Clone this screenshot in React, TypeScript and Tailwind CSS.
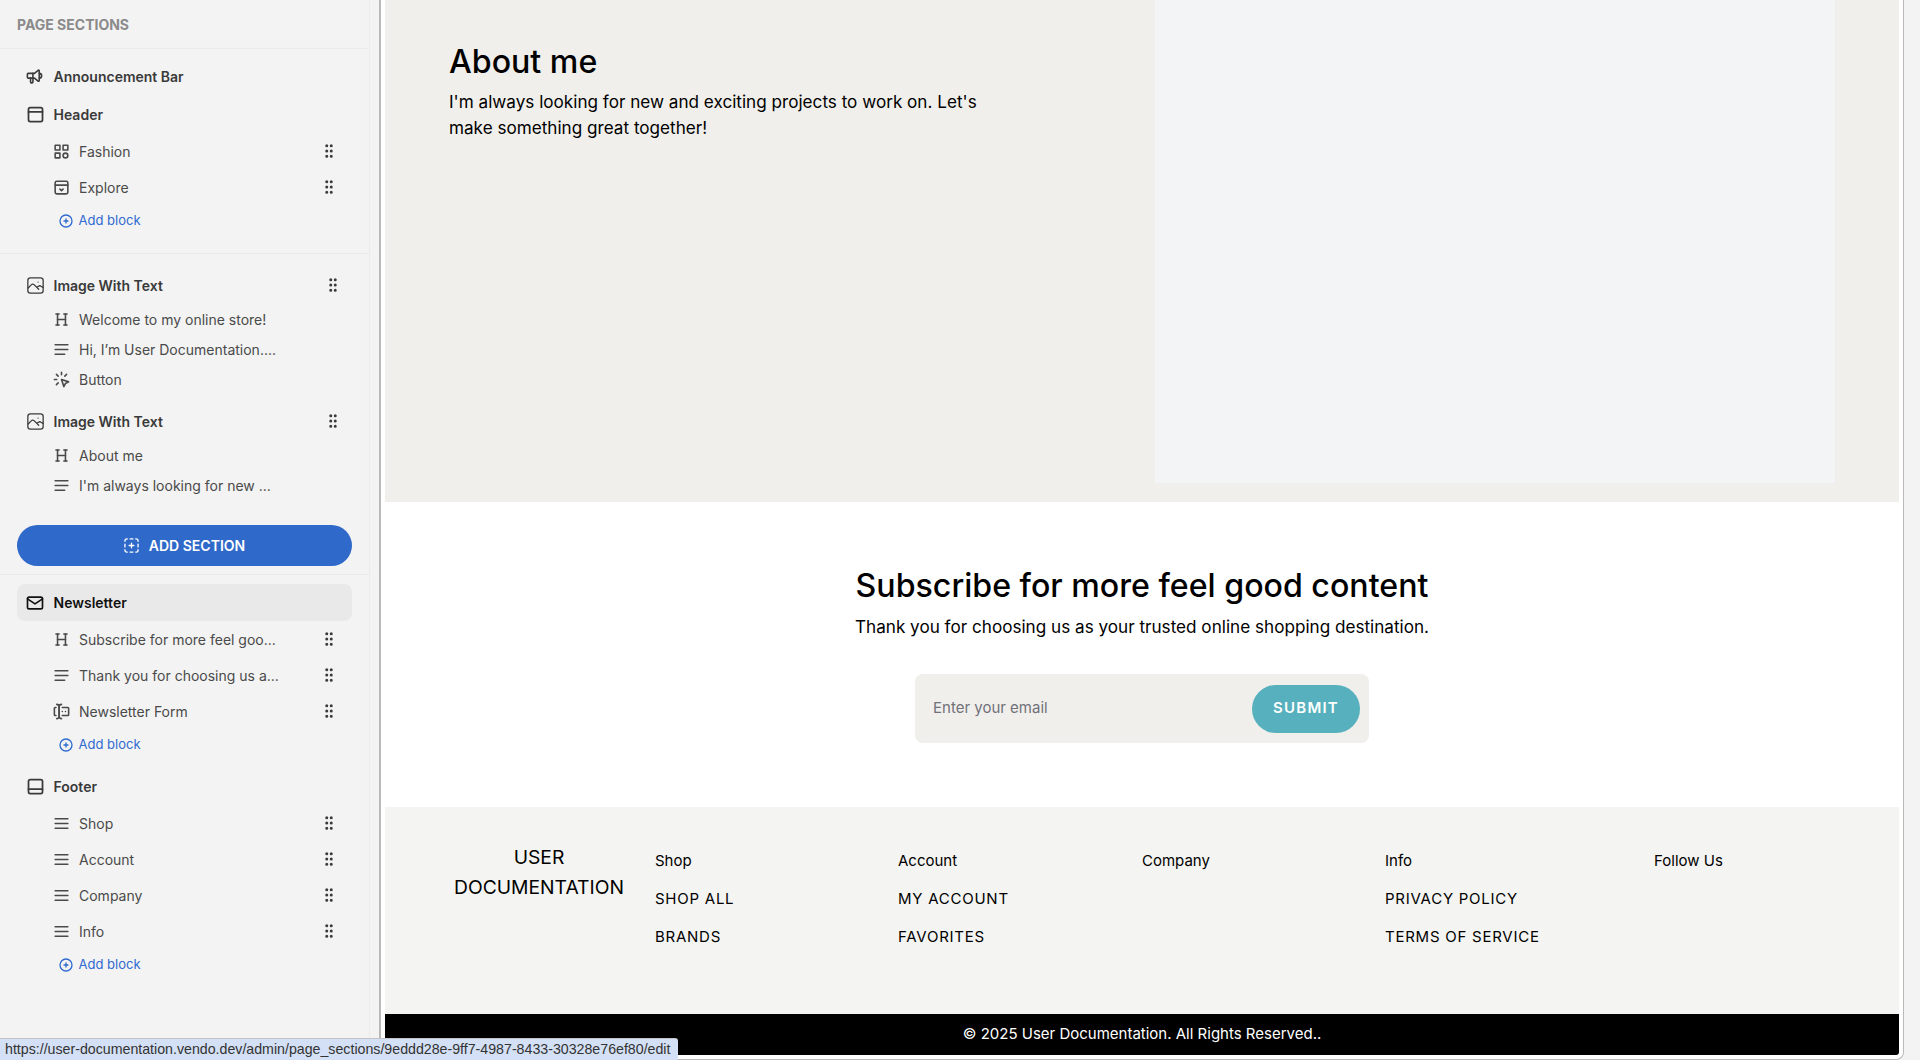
import React from 'react';
import {
  TbSpeakerphone,
  TbLayoutNavbar,
  TbCategory,
  TbLayoutNavbarExpand,
  TbGripVertical,
  TbCirclePlus,
  TbHeading,
  TbAlignJustified,
  TbClick,
  TbMail,
  TbForms,
  TbLayoutBottombar,
  TbMenu2,
} from 'react-icons/tb';

const ImageIcon = () => (
  <svg viewBox="0 0 20 20" fill="none" stroke="currentColor" strokeWidth="1.5" strokeLinecap="round" strokeLinejoin="round" className="w-[17px] h-[17px] ml-[2px]">
    <rect x="1" y="1" width="18" height="18" rx="3" />
    <path d="M1.3 13l4-4c1-.9 2-.9 3 0l5.5 5.5" />
    <path d="M12.5 11.5l1-.7c1-.7 2-.7 3 0l2.3 1.4" />
    <path d="M13 6h.01" />
  </svg>
);

const DashedPlus = () => (
  <svg viewBox="0 0 16 16" fill="none" stroke="currentColor" strokeWidth="1.4" strokeLinecap="round" className="w-[15px] h-[15px]">
    <path d="M1 3.5V3a2 2 0 0 1 2-2h.5M6.5 1h3M12.5 1h.5a2 2 0 0 1 2 2v.5M15 6.5v3M15 12.5v.5a2 2 0 0 1-2 2h-.5M9.5 15h-3M3.5 15H3a2 2 0 0 1-2-2v-.5M1 9.5v-3" />
    <path d="M5.5 8h5M8 5.5v5" />
  </svg>
);

const SectionRow = ({ icon, label, drag, active }: { icon: React.ReactNode; label: string; drag?: boolean; active?: boolean }) => (
  <div className={`flex items-center pl-[8px] pr-[10px] mx-[17px] text-[14px] font-semibold ${active ? 'h-[37px] bg-[#e9e9e9] rounded-lg text-[#111]' : 'h-[38px] text-[#3a3a3a]'}`}>
    <span className="w-[28.5px] flex items-center">{icon}</span>
    <span className="flex-1">{label}</span>
    {drag && <TbGripVertical size={18} className="text-[#3a3a3a]" />}
  </div>
);

const BlockRow = ({ icon, label, drag, short }: { icon: React.ReactNode; label: string; drag?: boolean; short?: boolean }) => (
  <div className={`flex items-center pl-[52px] pr-[31px] text-[14px] text-[#4a4a4a] ${short ? 'h-[30px]' : 'h-[36px]'}`}>
    <span className="w-[27px] flex items-center">{icon}</span>
    <span className="flex-1">{label}</span>
    {drag && <TbGripVertical size={18} className="text-[#3a3a3a]" />}
  </div>
);

const AddBlock = () => (
  <div className="flex items-center h-[28px] pt-[3px] pl-[58px] text-[13px] text-[#2f6bd0]">
    <TbCirclePlus size={16} className="mr-[4.5px]" />
    Add block
  </div>
);

const FooterColumn = ({ title, links, className }: { title: string; links: string[]; className: string }) => (
  <div className={className}>
    <p className="text-[15px] leading-[24px] text-black">{title}</p>
    {links.map((link) => (
      <p key={link} className="mt-[14px] text-[15px] leading-[24px] tracking-[0.05em] text-black">{link}</p>
    ))}
  </div>
);

const Sidebar = () => {
  const text = <TbAlignJustified size={19} />;
  const menu = <TbMenu2 size={19} />;
  const heading = <TbHeading size={19} />;
  return (
    <aside className="w-[370px] shrink-0 h-full bg-[#f3f3f3] border-r border-[#ececec]">
      <div className="h-[49px] border-b border-[#ebebeb] pl-[17px] flex items-center">
        <span className="text-[14px] font-bold text-[#8a8a8a] uppercase">Page Sections</span>
      </div>
      <div className="pt-[8px]">
        <SectionRow icon={<TbSpeakerphone size={19} />} label="Announcement Bar" />
        <SectionRow icon={<TbLayoutNavbar size={21} />} label="Header" />
        <BlockRow icon={<TbCategory size={19} />} label="Fashion" drag />
        <BlockRow icon={<TbLayoutNavbarExpand size={19} />} label="Explore" drag />
        <AddBlock />
      </div>
      <div className="mt-[20px] border-b border-[#e9e9e9]" />
      <div className="pt-[12px]">
        <SectionRow icon={<ImageIcon />} label="Image With Text" drag />
        <BlockRow icon={heading} label="Welcome to my online store!" short />
        <BlockRow icon={text} label="Hi, I’m User Documentation...." short />
        <BlockRow icon={<TbClick size={19} />} label="Button" short />
        <div className="h-[8px]" />
        <SectionRow icon={<ImageIcon />} label="Image With Text" drag />
        <BlockRow icon={heading} label="About me" short />
        <BlockRow icon={text} label="I'm always looking for new ..." short />
      </div>
      <div className="mt-[25px] mx-[17px] h-[41px] rounded-full bg-[#2f69c9] text-white flex items-center justify-center gap-[10px] text-[14px] font-semibold uppercase">
        <DashedPlus />
        Add Section
      </div>
      <div className="mt-[8px] border-b border-[#e9e9e9]" />
      <div className="pt-[9px]">
        <SectionRow icon={<TbMail size={20} />} label="Newsletter" active />
        <BlockRow icon={heading} label="Subscribe for more feel goo..." drag />
        <BlockRow icon={text} label="Thank you for choosing us a..." drag />
        <BlockRow icon={<TbForms size={19} />} label="Newsletter Form" drag />
        <AddBlock />
        <div className="h-[10px]" />
        <SectionRow icon={<TbLayoutBottombar size={21} />} label="Footer" />
        <BlockRow icon={menu} label="Shop" drag />
        <BlockRow icon={menu} label="Account" drag />
        <BlockRow icon={menu} label="Company" drag />
        <BlockRow icon={menu} label="Info" drag />
        <AddBlock />
      </div>
    </aside>
  );
};

const Preview = () => (
  <main className="flex-1 h-full pr-[16px] pl-[9px]">
    <div className="h-full border-l-2 border-r border-b border-[#b9b9b9] rounded-br-lg bg-white pl-[4px] pr-[4px] pb-[4px] flex flex-col overflow-hidden">
      <section className="h-[502px] shrink-0 bg-[#f0efeb] flex justify-between pl-[64px] pr-[64px] pb-[19px]">
        <div className="pt-[41px] w-[540px]">
          <h2 className="text-[32.14px] leading-[42px] font-medium text-black">About me</h2>
          <p className="mt-[6px] text-[17.14px] leading-[26px] text-black">I'm always looking for new and exciting projects to work on. Let's make something great together!</p>
        </div>
        <div className="w-[680px] h-full bg-[#f3f4f6]" />
      </section>

      <section className="h-[305px] shrink-0 bg-white flex flex-col items-center pt-[63px]">
        <h2 className="text-[32.14px] leading-[42px] font-medium text-black">Subscribe for more feel good content</h2>
        <p className="mt-[6px] text-[17.14px] leading-[28px] text-black">Thank you for choosing us as your trusted online shopping destination.</p>
        <div className="mt-[33px] w-[454px] h-[69px] rounded-lg bg-[#f0efeb] flex items-center justify-between pl-[18px] pr-[9px]">
          <span className="text-[15px] text-[#71717a]">Enter your email</span>
          <span className="w-[108px] h-[48px] rounded-full bg-[#56b0bd] text-white text-[15px] font-semibold tracking-[0.08em] flex items-center justify-center">SUBMIT</span>
        </div>
      </section>

      <footer className="flex-1 bg-[#f4f4f2] flex pt-[35px]">
        <div className="w-[270px] shrink-0 text-center text-[19.3px] leading-[30px] text-black pl-[58px] pr-[20px]">USER DOCUMENTATION</div>
        <FooterColumn className="w-[243px] shrink-0 pt-[7px]" title="Shop" links={['SHOP ALL', 'BRANDS']} />
        <FooterColumn className="w-[244px] shrink-0 pt-[7px]" title="Account" links={['MY ACCOUNT', 'FAVORITES']} />
        <FooterColumn className="w-[243px] shrink-0 pt-[7px]" title="Company" links={[]} />
        <FooterColumn className="w-[269px] shrink-0 pt-[7px]" title="Info" links={['PRIVACY POLICY', 'TERMS OF SERVICE']} />
        <FooterColumn className="pt-[7px]" title="Follow Us" links={[]} />
      </footer>
      <div className="h-[41px] shrink-0 bg-black text-white text-[15px] flex items-center justify-center rounded-br-[3px]">© 2025 User Documentation. All Rights Reserved..</div>
    </div>
  </main>
);

export default function App() {
  return (
    <div className="relative w-[1920px] h-[1060px] overflow-hidden flex bg-[#f3f3f3] font-['Inter',sans-serif]">
      <Sidebar />
      <Preview />
      <div className="absolute left-0 bottom-0 w-[678px] h-[22px] bg-[#d3e0f5] border-t border-[#c4c4c4] rounded-tr-[3px] pl-[5px] flex items-center text-[14.2px] text-[#333] font-['Liberation_Sans',sans-serif]">
        https://user-documentation.vendo.dev/admin/page_sections/9eddd28e-9ff7-4987-8433-30328e76ef80/edit
      </div>
    </div>
  );
}
